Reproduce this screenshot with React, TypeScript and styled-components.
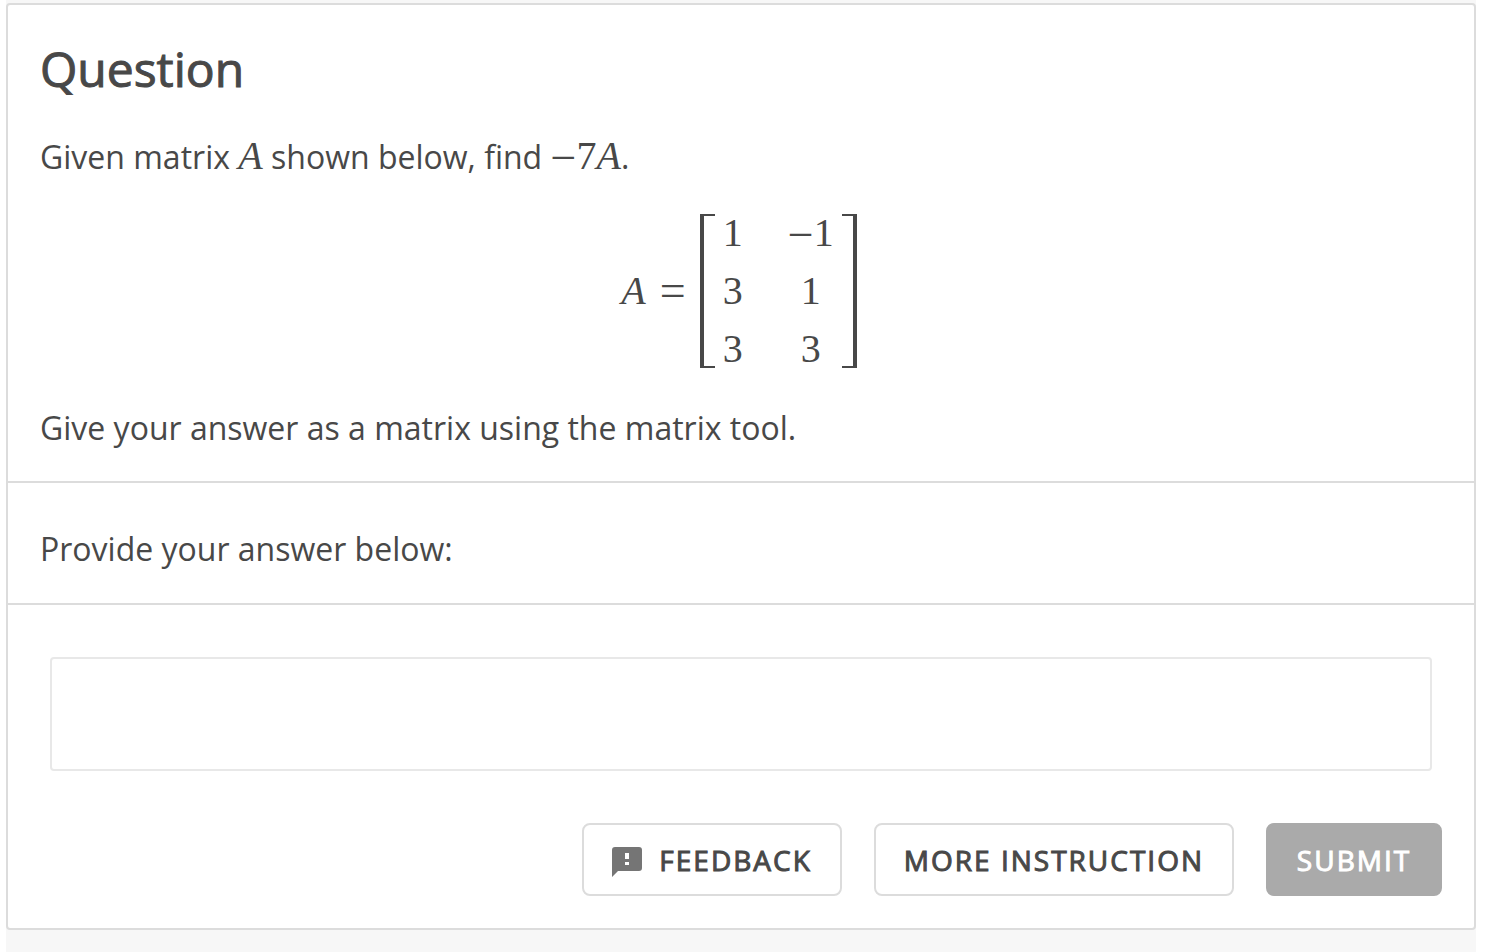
import React from "react";
import styled, { createGlobalStyle, css } from "styled-components";

const GlobalStyle = createGlobalStyle`
  *, *::before, *::after { box-sizing: border-box; }
  body {
    margin: 0;
    background: #ffffff;
    color: #484848;
    font-family: "Open Sans", sans-serif;
    font-size: 32px;
    line-height: 48px;
  }
`;

const Page = styled.main`
  min-height: 100vh;
  margin: 0 10px 0 6px;
  padding: 3px 0 22px;
  background: #f7f7f7;
`;

const Card = styled.article`
  background: #ffffff;
  border: 2px solid #dcdcdc;
  border-radius: 4px;
`;

const Section = styled.section`
  padding: 32px 32px 29px;
  border-bottom: 2px solid #dcdcdc;
`;

const PromptSection = styled(Section)`
  padding: 42px 32px 30px;
`;

const Title = styled.h1`
  margin: 0 0 32px;
  font-size: 48px;
  font-weight: 400;
  line-height: 64px;
  -webkit-text-stroke: 1px currentColor;
`;

const Text = styled.p`
  margin: 0;
`;

const PromptLabel = styled.label`
  display: block;
`;

const MathText = styled.span`
  font-family: "Liberation Serif", serif;
  font-size: 40px;
  line-height: 1;
`;

const Variable = styled.i`
  font-style: italic;
`;

const Operator = styled.span`
  font-size: 46px;
  line-height: 32px;
`;

const Minus = styled(Operator)`
  vertical-align: -4px;
`;

const Equation = styled.div`
  display: flex;
  justify-content: center;
  align-items: center;
  gap: 14px;
  margin: 33px 0 36px;
  padding-right: 4px;
  font-family: "Liberation Serif", serif;
  font-size: 40px;
`;

const Matrix = styled.span`
  display: flex;
  height: 154px;
`;

const Bracket = styled.span<{ $side: "left" | "right" }>`
  width: 15px;
  border: solid #484848;
  border-width: ${({ $side }) => ($side === "left" ? "2px 0 2px 4px" : "2px 4px 2px 0")};
`;

const Entries = styled.span`
  display: grid;
  grid-template-columns: auto auto;
  grid-auto-rows: 58px;
  align-content: center;
  column-gap: 45px;
  padding: 0 8px;
  text-align: center;
  line-height: 58px;
`;

const AnswerForm = styled.form`
  padding: 52px 32px 32px;
`;

const AnswerField = styled.div`
  padding: 0 10px;
`;

const AnswerInput = styled.input`
  display: block;
  width: 100%;
  height: 114px;
  padding: 0 24px;
  border: 2px solid #e8e8e8;
  border-radius: 4px;
  background: #ffffff;
  color: inherit;
  font: inherit;
`;

const Actions = styled.div`
  display: flex;
  flex-wrap: wrap;
  justify-content: flex-end;
  gap: 32px;
  margin-top: 52px;
`;

const Button = styled.button<{ $filled?: boolean }>`
  display: inline-flex;
  align-items: center;
  justify-content: center;
  gap: 17px;
  min-width: 176px;
  height: 73px;
  padding: 0 28px;
  border: 2px solid #dcdcdc;
  border-radius: 8px;
  background: #ffffff;
  color: #484848;
  font-family: inherit;
  font-size: 28px;
  font-weight: 400;
  letter-spacing: 2px;
  -webkit-text-stroke: 1px currentColor;
  ${({ $filled }) =>
    $filled &&
    css`
      border-color: #aaaaaa;
      background: #aaaaaa;
      color: #ffffff;
    `}
`;

const Icon = styled.svg`
  width: 30px;
  height: 30px;
  margin-top: 4px;
  fill: #757575;
`;

function FeedbackIcon() {
  return (
    <Icon viewBox="0 0 30 30" aria-hidden="true">
      <path
        fillRule="evenodd"
        d="M3 0H27a3 3 0 0 1 3 3V21a3 3 0 0 1-3 3H6L0 30V3a3 3 0 0 1 3-3ZM13 6v6h4V6ZM13 15v3h4v-3Z"
      />
    </Icon>
  );
}

const entries = [1, -1, 3, 1, 3, 3];

export default function App() {
  return (
    <>
      <GlobalStyle />
      <Page>
        <Card>
          <Section>
            <Title>Question</Title>
            <Text>
              Given matrix <MathText><Variable>A</Variable></MathText> shown below, find{" "}
              <MathText><Minus>−</Minus>7<Variable>A</Variable></MathText>.
            </Text>
            <Equation>
              <Variable>A</Variable>
              <Operator>=</Operator>
              <Matrix>
                <Bracket $side="left" />
                <Entries>
                  {entries.map((entry, index) => (
                    <span key={index}>
                      {entry < 0 && <Minus>−</Minus>}
                      {Math.abs(entry)}
                    </span>
                  ))}
                </Entries>
                <Bracket $side="right" />
              </Matrix>
            </Equation>
            <Text>Give your answer as a matrix using the matrix tool.</Text>
          </Section>
          <PromptSection>
            <PromptLabel htmlFor="answer">Provide your answer below:</PromptLabel>
          </PromptSection>
          <AnswerForm onSubmit={(event) => event.preventDefault()}>
            <AnswerField>
              <AnswerInput id="answer" type="text" autoComplete="off" />
            </AnswerField>
            <Actions>
              <Button type="button">
                <FeedbackIcon />
                FEEDBACK
              </Button>
              <Button type="button">MORE INSTRUCTION</Button>
              <Button type="submit" $filled disabled>
                SUBMIT
              </Button>
            </Actions>
          </AnswerForm>
        </Card>
      </Page>
    </>
  );
}
